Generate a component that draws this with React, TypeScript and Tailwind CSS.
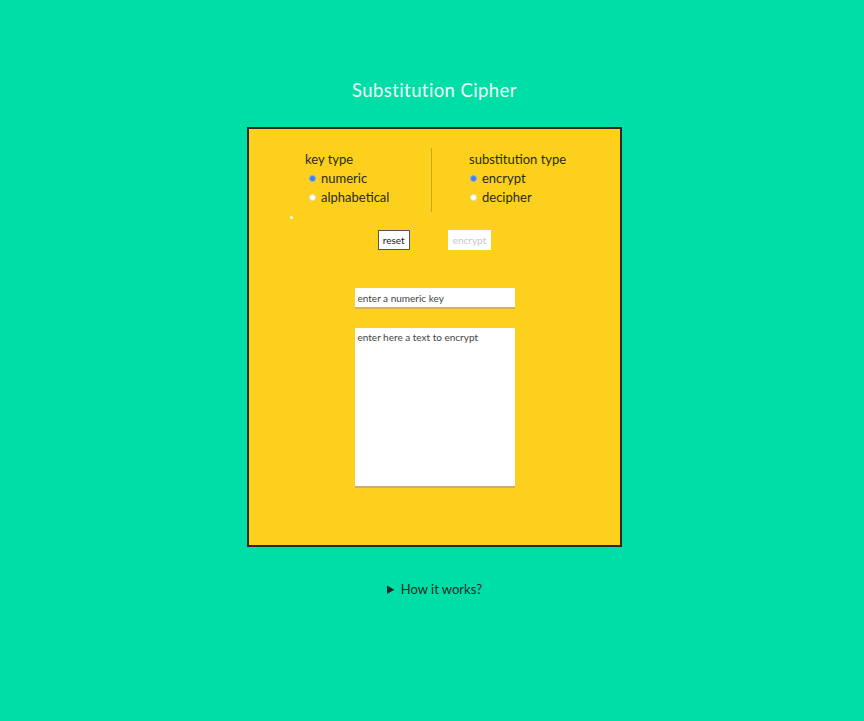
import { useState } from "react";

const font = { fontFamily: "Lato, 'Open Sans', sans-serif" };

function Radio({ label, checked }: { label: string; checked: boolean }) {
  return (
    <label className="flex items-center gap-[5px] h-[19px] text-[13px] text-[#2a2a1a]">
      <span
        className={`w-[7px] h-[7px] rounded-full border ${
          checked ? "bg-[#3b82f6] border-[#7fb0f5]" : "bg-white border-[#ddd]"
        }`}
      />
      {label}
    </label>
  );
}

export default function App() {
  const [key] = useState("");
  return (
    <div
      className="min-h-[721px] w-full bg-[#00dea8] flex flex-col items-center pt-[78px] pl-[5px]"
      style={font}
    >
      <h1 className="text-[18.5px] text-[#f1fbf5] tracking-[0.4px] h-[24px] leading-[24px]">
        Substitution Cipher
      </h1>

      <div className="mt-[25px] w-[375px] h-[420px] bg-[#fdd01d] border-2 border-[#2a2a1e] flex flex-col items-center">
        <div className="relative flex w-full pt-[21px]">
          <div className="w-[182px] pl-[56px]">
            <div className="text-[13px] text-[#2a2a1a] h-[19px] leading-[19px]">key type</div>
            <div className="pl-[4px]">
              <Radio label="numeric" checked />
              <Radio label="alphabetical" checked={false} />
            </div>
          </div>
          <div className="w-px h-[64px] bg-[#c9a81c] -mt-[2px]" />
          <div className="pl-[37px]">
            <div className="text-[13px] text-[#2a2a1a] h-[19px] leading-[19px]">substitution type</div>
            <div className="pl-[1px]">
              <Radio label="encrypt" checked />
              <Radio label="decipher" checked={false} />
            </div>
          </div>
          <span className="absolute left-[41px] top-[87px] w-[3px] h-[3px] rounded-full bg-white" />
        </div>

        <div className="flex gap-[38px] mt-[18px]">
          <button className="h-[20px] px-[4px] bg-white border border-[#555] text-[10px] text-[#222]">
            reset
          </button>
          <button disabled className="h-[20px] px-[5px] bg-white text-[10px] text-[#c8c8c8]">
            encrypt
          </button>
        </div>

        <input
          value={key}
          readOnly
          placeholder="enter a numeric key"
          className="mt-[38px] w-[160px] h-[21px] bg-white px-[3px] text-[10px] text-[#333] placeholder:text-[#444] border-b-2 border-[#d4b54a] outline-none"
        />
        <textarea
          readOnly
          placeholder="enter here a text to encrypt"
          className="mt-[19px] w-[160px] h-[160px] bg-white px-[3px] py-[2px] text-[10px] placeholder:text-[#444] border-b-2 border-[#c9b070] resize-none outline-none"
        />
      </div>

      <details className="mt-[33px] text-[13px] text-[#1d2a24]">
        <summary className="cursor-pointer">How it works?</summary>
      </details>
    </div>
  );
}
